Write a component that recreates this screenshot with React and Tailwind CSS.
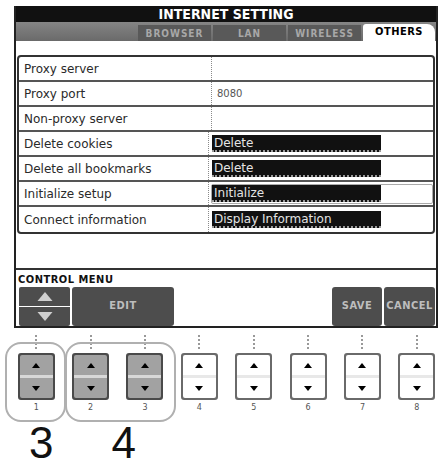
const rows = [
  { label: "Proxy server", value: "" },
  { label: "Proxy port", value: "8080" },
  { label: "Non-proxy server", value: "" },
  { label: "Delete cookies", box: "Delete" },
  { label: "Delete all bookmarks", box: "Delete" },
  { label: "Initialize setup", box: "Initialize", cursor: true },
  { label: "Connect information", box: "Display Information" },
];

const tabs = ["BROWSER", "LAN", "WIRELESS"];

const UpTri = ({ className }) => (
  <svg viewBox="0 0 10 6" className={className}>
    <polygon points="5,0 10,6 0,6" fill="currentColor" />
  </svg>
);

const DownTri = ({ className }) => (
  <svg viewBox="0 0 10 6" className={className}>
    <polygon points="0,0 10,0 5,6" fill="currentColor" />
  </svg>
);

const PanelButton = ({ dark }) => (
  <div
    className={
      "flex h-[47px] w-[37px] flex-col rounded-[3px] border-2 " +
      (dark ? "border-[#4a4a4a] bg-[#4a4a4a]" : "border-[#6a6a6a] bg-[#6a6a6a]")
    }
  >
    <div
      className={
        "flex flex-1 items-center justify-center rounded-t-[2px] " +
        (dark ? "bg-[#a2a2a2]" : "bg-white")
      }
    >
      <UpTri className="h-[5px] w-[8px] text-black" />
    </div>
    <div className={"h-[3px] " + (dark ? "bg-[#d8d8d8]" : "bg-[#e8e8e8]")} />
    <div
      className={
        "flex flex-1 items-center justify-center rounded-b-[2px] " +
        (dark ? "bg-[#a2a2a2]" : "bg-white")
      }
    >
      <DownTri className="h-[5px] w-[8px] text-black" />
    </div>
  </div>
);

const Row = ({ row, last }) => (
  <div className={"flex h-[25px] " + (last ? "" : "border-b-2 border-[#555]")}>
    <div className="flex w-[192px] items-center pl-[5px] text-[12px] text-[#2a2a2a]">
      {row.label}
    </div>
    <div className="flex flex-1 items-center border-l border-dotted border-[#8a8a8a] pl-[2px]">
      {row.value && <span className="pl-[3px] text-[10px] text-[#555]">{row.value}</span>}
      {row.box && (
        <div
          className={
            "flex h-[20px] w-[222px] items-center rounded-[2px] " +
            (row.cursor ? "border border-[#aaa]" : "border border-transparent")
          }
        >
          <div className="flex h-[17px] w-[169px] items-center border-b-2 border-dotted border-[#9a9a9a] bg-[#111] pl-[2px] text-[12px] text-[#e4e4e4]">
            {row.box}
          </div>
        </div>
      )}
    </div>
  </div>
);

export default function App() {
  return (
    <div className="relative h-[471px] w-[442px] overflow-hidden bg-white font-['DejaVu_Sans',sans-serif]">
      {/* screen */}
      <div className="ml-[14px] mt-[6px] flex h-[322px] w-[424px] flex-col border-x-2 border-b-2 border-[#222] bg-white">
        <div className="flex h-[16px] items-center justify-center bg-[#111] font-['DejaVu_Sans_Condensed',sans-serif] text-[14px] font-bold leading-none text-white">
          INTERNET SETTING
        </div>
        <div className="flex h-[19px] items-end justify-end gap-[2px] bg-gradient-to-b from-[#858585] to-[#6a6a6a] pr-[1px]">
          {tabs.map((t) => (
            <div
              key={t}
              className="flex h-[16px] w-[73px] items-center justify-center bg-[#595959] font-['DejaVu_Sans_Condensed',sans-serif] text-[10px] font-bold tracking-[1px] text-[#a8a8a8]"
            >
              {t}
            </div>
          ))}
          <div className="flex h-[17px] w-[72px] items-center justify-center rounded-tl-[3px] rounded-tr-[8px] bg-white font-['DejaVu_Sans_Condensed',sans-serif] text-[11px] font-bold tracking-[0.5px] text-black">
            OTHERS
          </div>
        </div>
        <div className="mx-[1px] mt-[14px] rounded-[4px] border-2 border-[#333]">
          {rows.map((r, i) => (
            <Row key={r.label} row={r} last={i === rows.length - 1} />
          ))}
        </div>
        <div className="flex-1" />
        <div className="border-t-2 border-[#333] px-[1px] pt-[3px]">
          <div className="pl-[1px] font-['DejaVu_Sans_Condensed',sans-serif] text-[11px] font-bold leading-[13px] tracking-[0.5px] text-[#111]">
            CONTROL MENU
          </div>
          <div className="mt-[1px] flex h-[39px] gap-[2px] pl-[2px]">
            <div className="flex w-[51px] flex-col gap-[1px]">
              <div className="flex flex-1 items-center justify-center rounded-t-[2px] bg-[#4d4d4d]">
                <UpTri className="h-[9px] w-[16px] text-[#cfcfcf]" />
              </div>
              <div className="flex flex-1 items-center justify-center rounded-b-[2px] bg-[#4d4d4d]">
                <DownTri className="h-[9px] w-[16px] text-[#cfcfcf]" />
              </div>
            </div>
            <div className="flex w-[102px] items-center justify-center rounded-[3px] bg-[#4d4d4d] font-['DejaVu_Sans_Condensed',sans-serif] text-[11px] font-bold tracking-[0.5px] text-[#bdbdbd]">
              EDIT
            </div>
            <div className="flex-1" />
            <div className="flex w-[50px] items-center justify-center rounded-[3px] bg-[#4d4d4d] font-['DejaVu_Sans_Condensed',sans-serif] text-[11px] font-bold tracking-[0.5px] text-[#bdbdbd]">
              SAVE
            </div>
            <div className="flex w-[51px] items-center justify-center rounded-[3px] bg-[#4d4d4d] font-['DejaVu_Sans_Condensed',sans-serif] text-[11px] font-bold tracking-[0.5px] text-[#bdbdbd]">
              CANCEL
            </div>
          </div>
        </div>
      </div>

      {/* panel buttons */}
      <div className="ml-[9px] mt-[7px] grid w-[435px] grid-cols-8">
        {[1, 2, 3, 4, 5, 6, 7, 8].map((n) => (
          <div key={n} className="flex flex-col items-center">
            <div className="flex h-[16px] flex-col items-center gap-[2px]">
              {[0, 1, 2, 3].map((d) => (
                <div key={d} className="h-[2px] w-[2px] rounded-full bg-[#777]" />
              ))}
            </div>
            <div className="mt-[2px]">
              <PanelButton dark={n <= 3} />
            </div>
            <div className="mt-[3px] text-[8px] leading-[10px] text-[#555]">{n}</div>
          </div>
        ))}
      </div>

      {/* group outlines */}
      <div className="absolute left-[5px] top-[342px] h-[80px] w-[61px] rounded-[16px] border-2 border-[#b0b0b0]" />
      <div className="absolute left-[65px] top-[342px] h-[80px] w-[111px] rounded-[16px] border-2 border-[#b0b0b0]" />

      <div className="mt-[8px] flex font-['Liberation_Sans',sans-serif] text-[44px] leading-none text-[#111]">
        <span className="ml-[29px]">3</span>
        <span className="ml-[58px]">4</span>
      </div>
    </div>
  );
}
